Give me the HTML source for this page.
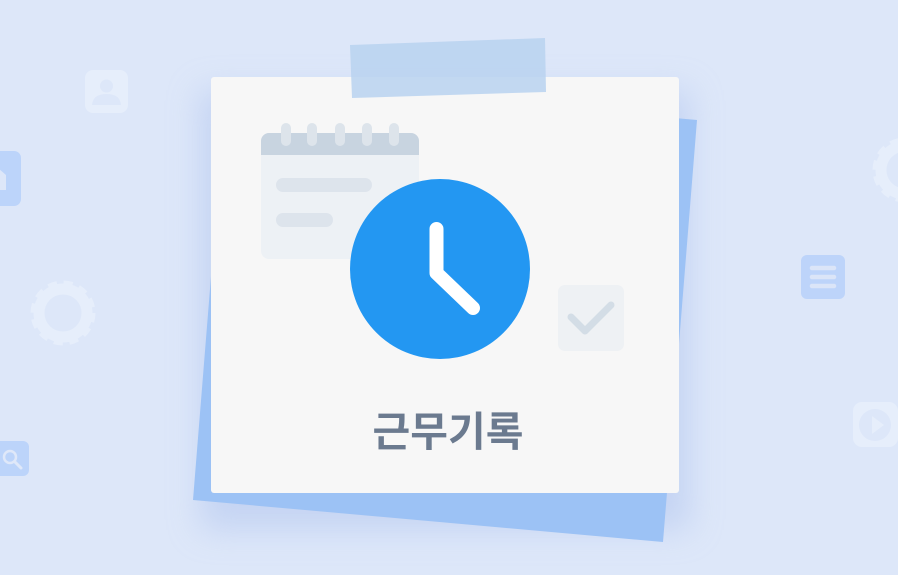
<!DOCTYPE html>
<html><head><meta charset="utf-8"><style>
html,body{margin:0;padding:0;}
body{width:898px;height:575px;overflow:hidden;background:#dde7f9;position:relative;font-family:"Liberation Sans","Noto Sans CJK KR",sans-serif;}
</style></head><body>
<svg width="898" height="575" viewBox="0 0 898 575" style="position:absolute;left:0;top:0">
<defs>
<filter id="sh" x="-20%" y="-20%" width="140%" height="140%"><feGaussianBlur stdDeviation="16"/></filter>
<g id="gear">
<circle r="24" fill="none" stroke="currentColor" stroke-width="11"/>
<circle r="28" fill="none" stroke="currentColor" stroke-width="9" stroke-dasharray="8.5 6.2"/>
</g>
</defs>
<rect x="85" y="70" width="43" height="43" rx="8" fill="#e6eefb"/>
<circle cx="106.5" cy="86" r="6.5" fill="#dde7f9"/>
<path d="M92 105 Q93 94 106.5 94 Q120 94 121 105 Z" fill="#dde7f9"/>
<rect x="-10" y="151" width="31" height="55" rx="7" fill="#bcd4fa"/>
<path d="M-2 168 L6 175 L6 190 L-2 190 Z" fill="#dde7f9"/>
<g transform="translate(63,313)" style="color:#e6eefb"><use href="#gear"/></g>
<g transform="translate(905,170)" style="color:#e6eefb"><use href="#gear"/></g>
<rect x="-8" y="441" width="37" height="35" rx="6" fill="#bcd4fa"/>
<circle cx="10" cy="457" r="6" fill="none" stroke="#dfe8f9" stroke-width="2.5"/>
<path d="M14.5 461.5 L21 468" stroke="#dfe8f9" stroke-width="3" stroke-linecap="round"/>
<rect x="801" y="255" width="44" height="44" rx="6" fill="#bdd4fa"/>
<g stroke="#dbe5f8" stroke-width="4.5" stroke-linecap="round"><path d="M812 268H834M812 277H834M812 286H834"/></g>
<rect x="853" y="402" width="45" height="45" rx="9" fill="#e6eefb"/>
<circle cx="875" cy="425" r="16" fill="#dde7f9"/>
<path d="M872 416 L884 425 L872 434 Z" fill="#e6eefb"/>
<rect x="200" y="90" width="490" height="440" fill="#b5c8ef" opacity="0.6" filter="url(#sh)"/>
<polygon points="227,78 697,120 663,542 193,500" fill="#9cc2f5"/>
<rect x="211" y="77" width="468" height="416" rx="3" fill="#f7f7f7"/>
<polygon points="350,45 545,38 546,92 352,98" fill="#b9d2f0" opacity="0.85"/>
<rect x="261" y="133" width="158" height="126" rx="8" fill="#edf1f5"/>
<path d="M269 133 H411 A8 8 0 0 1 419 141 V155 H261 V141 A8 8 0 0 1 269 133Z" fill="#c8d4e0"/>
<g stroke="#dde4eb" stroke-width="10" stroke-linecap="round"><path d="M286 128V141M312 128V141M340 128V141M367 128V141M394 128V141"/></g>
<rect x="276" y="178" width="96" height="14" rx="7" fill="#dde4ec"/>
<rect x="276" y="213" width="57" height="14" rx="7" fill="#dde4ec"/>
<rect x="558" y="285" width="66" height="66" rx="7" fill="#eef1f4"/>
<path d="M571 317 L585 331 L611 305" fill="none" stroke="#d3dde6" stroke-width="7" stroke-linecap="round" stroke-linejoin="round"/>
<circle cx="440" cy="269" r="90" fill="#2397f2"/>
<path d="M436.5 229 V273 L473 308" fill="none" stroke="#fff" stroke-width="14" stroke-linecap="round" stroke-linejoin="round"/>
<text x="448" y="446" text-anchor="middle" font-family="'Noto Sans CJK KR',sans-serif" font-weight="bold" font-size="41" fill="#6b7a8f">근무기록</text>
</svg>
</body></html>
